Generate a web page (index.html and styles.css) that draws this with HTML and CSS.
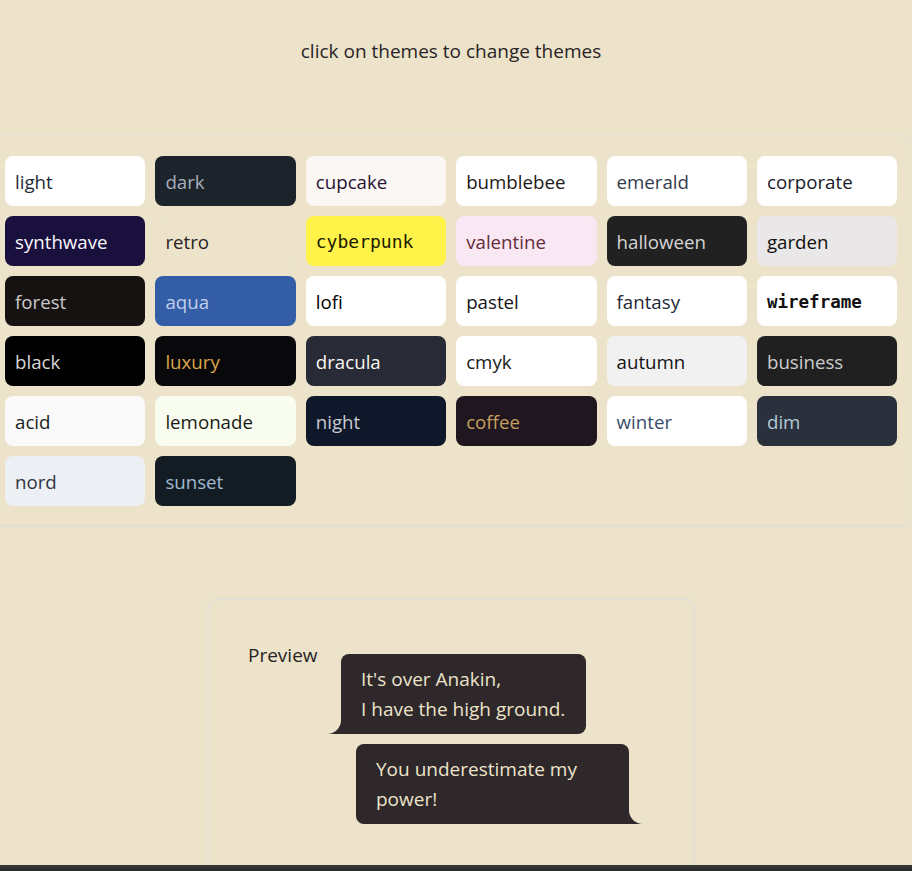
FILE: index.html
```html
<!DOCTYPE html>
<html lang="en">
<head>
<meta charset="utf-8">
<title>Themes</title>
<link rel="stylesheet" href="styles.css">
</head>
<body>
<div class="page">
  <header class="intro">
    <p class="intro-text">click on themes to change themes</p>
  </header>
  <section class="themes">
    <div class="theme-grid">
      <button class="theme t-light">light</button>
      <button class="theme t-dark">dark</button>
      <button class="theme t-cupcake">cupcake</button>
      <button class="theme t-bumblebee">bumblebee</button>
      <button class="theme t-emerald">emerald</button>
      <button class="theme t-corporate">corporate</button>
      <button class="theme t-synthwave">synthwave</button>
      <button class="theme t-retro">retro</button>
      <button class="theme t-cyberpunk">cyberpunk</button>
      <button class="theme t-valentine">valentine</button>
      <button class="theme t-halloween">halloween</button>
      <button class="theme t-garden">garden</button>
      <button class="theme t-forest">forest</button>
      <button class="theme t-aqua">aqua</button>
      <button class="theme t-lofi">lofi</button>
      <button class="theme t-pastel">pastel</button>
      <button class="theme t-fantasy">fantasy</button>
      <button class="theme t-wireframe">wireframe</button>
      <button class="theme t-black">black</button>
      <button class="theme t-luxury">luxury</button>
      <button class="theme t-dracula">dracula</button>
      <button class="theme t-cmyk">cmyk</button>
      <button class="theme t-autumn">autumn</button>
      <button class="theme t-business">business</button>
      <button class="theme t-acid">acid</button>
      <button class="theme t-lemonade">lemonade</button>
      <button class="theme t-night">night</button>
      <button class="theme t-coffee">coffee</button>
      <button class="theme t-winter">winter</button>
      <button class="theme t-dim">dim</button>
      <button class="theme t-nord">nord</button>
      <button class="theme t-sunset">sunset</button>
    </div>
  </section>
  <section class="preview-card">
    <div class="preview-row">
      <span class="preview-label">Preview</span>
      <div class="chat">
        <div class="bubble bubble-start">It's over Anakin,<br>I have the high ground.</div>
        <div class="bubble bubble-end">You underestimate my<br>power!</div>
      </div>
    </div>
  </section>
</div>
<div class="bottom-bar"></div>
</body>
</html>
```
FILE: styles.css
```css
html, body {
  margin: 0;
  padding: 0;
}
body {
  background: #ece3ca;
  color: #282425;
  font-family: "Open Sans", "Noto Sans", sans-serif;
  font-size: 19px;
  line-height: 28px;
}
.page {
  width: 912px;
}
.intro {
  box-sizing: border-box;
  width: 902px;
  height: 135px;
  padding-top: 37px;
  text-align: center;
}
.intro-text {
  margin: 0;
}
.themes {
  box-sizing: border-box;
  width: 911px;
  border-top: 1px solid #e4e0d3;
  border-right: 1px solid #e4e0d3;
  border-bottom: 2px solid #e2dfd5;
  border-radius: 0 8px 8px 0;
  padding: 20px 0 19px 5px;
}
.theme-grid {
  display: grid;
  grid-template-columns: repeat(6, 140.4px);
  grid-auto-rows: 50px;
  column-gap: 10px;
  row-gap: 10px;
}
.theme {
  font: inherit;
  font-size: 18.7px;
  border: 0;
  margin: 0;
  border-radius: 8px;
  padding: 2px 0 0 10px;
  text-align: left;
  height: 50px;
  cursor: pointer;
}
.t-light { background: #ffffff; color: #1f2937; }
.t-dark { background: #1d232a; color: #a6adbb; }
.t-cupcake { background: #faf7f5; color: #291334; }
.t-bumblebee { background: #ffffff; color: #1c1917; }
.t-emerald { background: #ffffff; color: #333c4d; }
.t-corporate { background: #ffffff; color: #181a2a; }
.t-synthwave { background: #1a103d; color: #f9f7fd; }
.t-retro { background: #ece3ca; color: #282425; }
.t-cyberpunk { background: #fff248; color: #1a1a00; font-family: "DejaVu Sans Mono", "Liberation Mono", monospace; font-size: 18px; }
.t-valentine { background: #fae7f4; color: #632c3b; }
.t-halloween { background: #212121; color: #d5d5d5; }
.t-garden { background: #e9e7e7; color: #100f0f; }
.t-forest { background: #171212; color: #cac9c9; }
.t-aqua { background: #345da7; color: #c2d0ea; }
.t-lofi { background: #ffffff; color: #000000; }
.t-pastel { background: #ffffff; color: #161616; }
.t-fantasy { background: #ffffff; color: #1f2937; }
.t-wireframe { background: #ffffff; color: #111111; font-family: "DejaVu Sans Mono", monospace; font-weight: bold; font-size: 17.5px; }
.t-black { background: #000000; color: #d6d6d6; }
.t-luxury { background: #09090b; color: #dca54c; }
.t-dracula { background: #282a36; color: #f8f8f2; }
.t-cmyk { background: #ffffff; color: #1a1a1a; }
.t-autumn { background: #f1f1f1; color: #141414; }
.t-business { background: #202020; color: #cdcdcd; }
.t-acid { background: #fafafa; color: #1b1d1d; }
.t-lemonade { background: #f8fdef; color: #181a14; }
.t-night { background: #0f172a; color: #c9cbd0; }
.t-coffee { background: #20161f; color: #c59f60; }
.t-winter { background: #ffffff; color: #394e6a; }
.t-dim { background: #2a303c; color: #b2ccd6; }
.t-nord { background: #eceff4; color: #2e3440; }
.t-sunset { background: #121c22; color: #9fb9d0; }

.preview-card {
  box-sizing: border-box;
  width: 488px;
  min-height: 320px;
  margin: 71px 0 0 207px;
  border: 2px solid #e4e0d3;
  border-radius: 12px;
  padding: 41px 0 0 39px;
}
.preview-row {
  display: flex;
  align-items: flex-start;
}
.preview-label {
  width: 79px;
  flex: none;
}
.chat {
  width: 316px;
  padding-top: 13px;
  display: flex;
  flex-direction: column;
  gap: 10px;
}
.bubble {
  position: relative;
  box-sizing: border-box;
  background: #2e282a;
  color: #ede3cb;
  line-height: 30px;
  padding: 10px 20px;
  border-radius: 8px;
}
.bubble::before {
  content: "";
  position: absolute;
  bottom: 0;
  width: 14px;
  height: 14px;
}
.bubble-start {
  align-self: flex-start;
  margin-left: 14px;
  width: 245px;
  border-bottom-left-radius: 0;
}
.bubble-start::before {
  left: -14px;
  background: radial-gradient(circle at 0 0, transparent 13.5px, #2e282a 14.5px);
}
.bubble-end {
  align-self: flex-end;
  margin-right: 14px;
  width: 273px;
  border-bottom-right-radius: 0;
}
.bubble-end::before {
  right: -14px;
  background: radial-gradient(circle at 100% 0, transparent 13.5px, #2e282a 14.5px);
}
.bottom-bar {
  position: fixed;
  left: 0;
  right: 0;
  bottom: 0;
  height: 6px;
  background: #2a2a2a;
  border-top: 3px solid #353535;
  box-sizing: border-box;
}
```
